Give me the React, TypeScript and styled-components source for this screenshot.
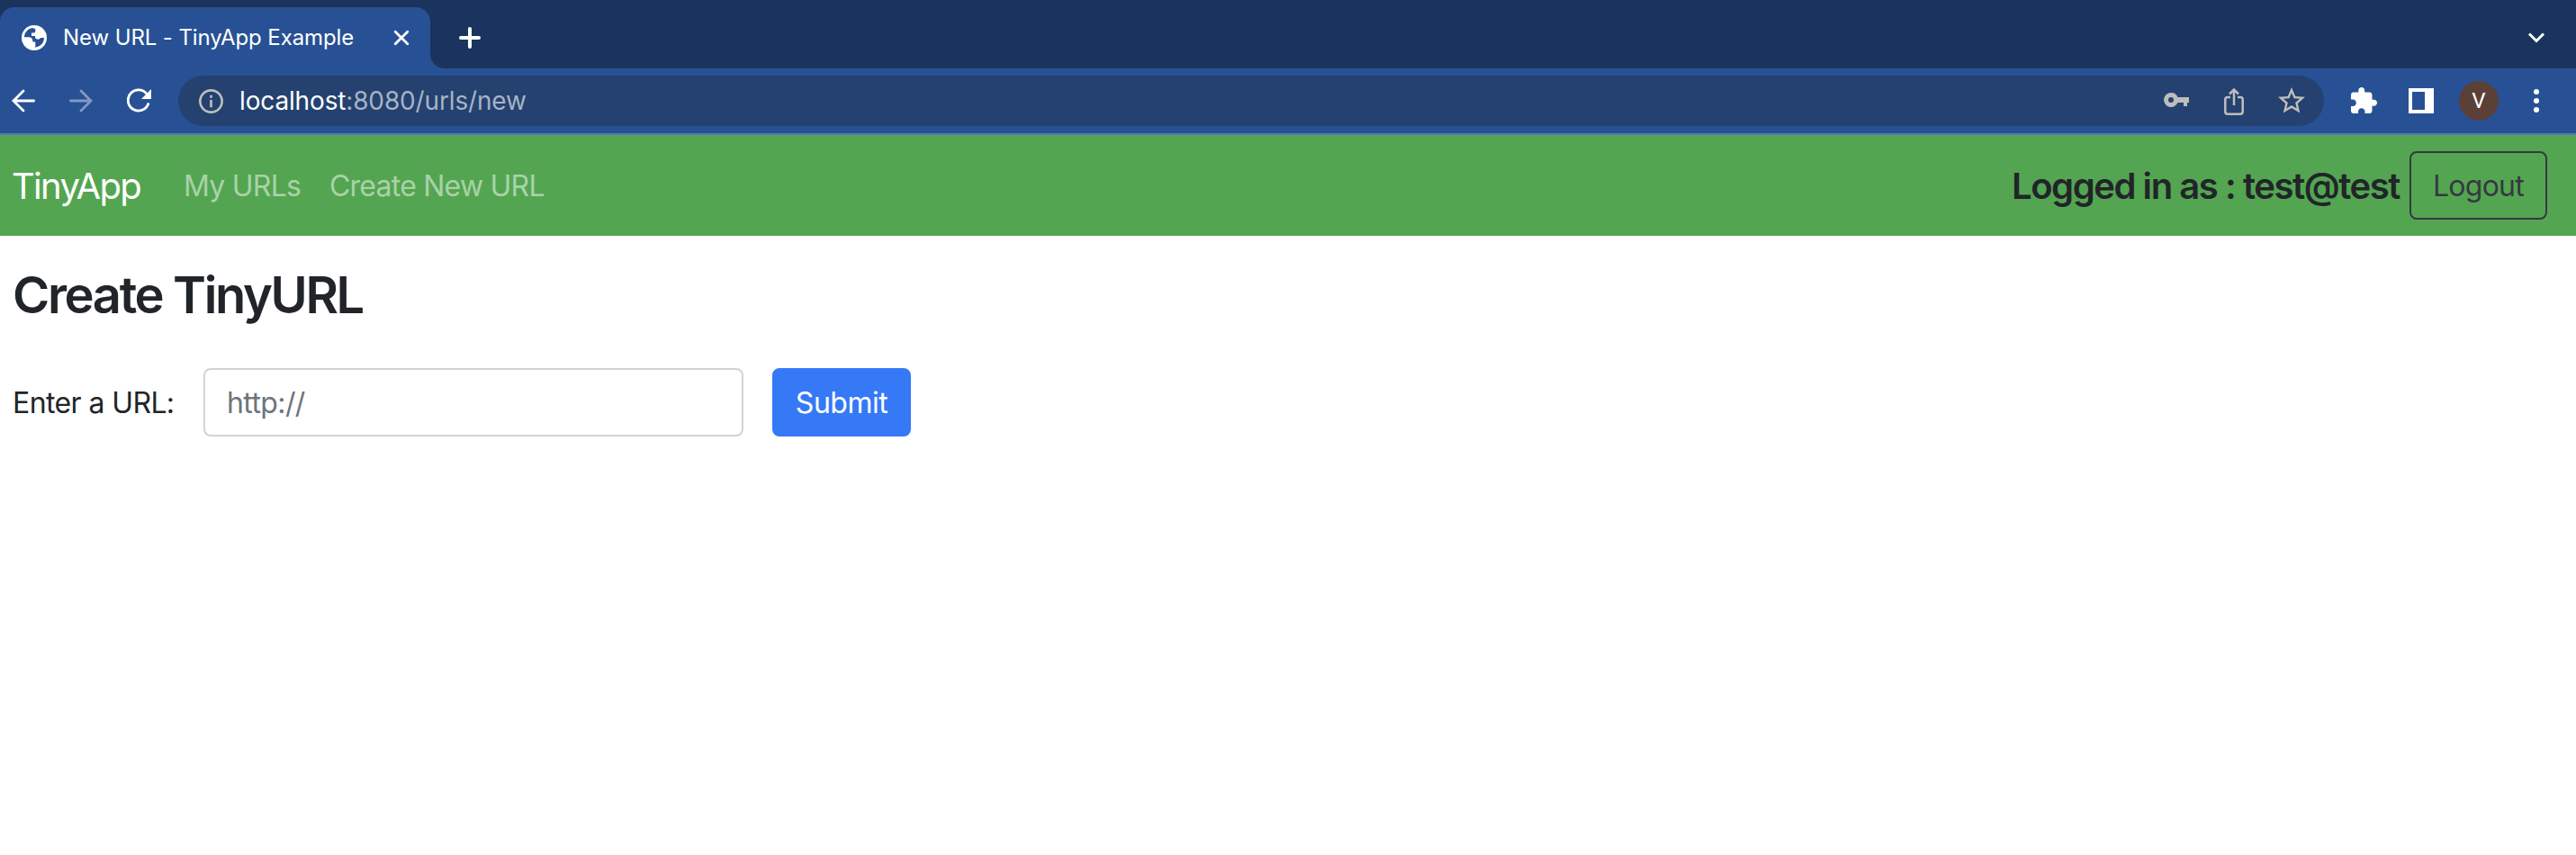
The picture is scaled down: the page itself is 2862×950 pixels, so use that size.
import React from 'react';
import styled, { createGlobalStyle } from 'styled-components';

const Global = createGlobalStyle`
  *, *::before, *::after { box-sizing: border-box; }
  html, body { margin: 0; background: #fff; }
  body { font-family: Inter, Roboto, "Liberation Sans", sans-serif; color: #212529; overflow: hidden; }
  h2 { margin: 0; }
`;

const Label = styled.span<{ $w: number; $size: number; $weight?: number; $color?: string; $ls?: number; $dy?: number }>`
  width: ${p => p.$w}px;
  font-size: ${p => p.$size}px;
  font-weight: ${p => p.$weight ?? 400};
  color: ${p => p.$color ?? 'inherit'};
  letter-spacing: ${p => p.$ls ?? 0}px;
  padding-top: ${p => p.$dy ?? 0}px;
  line-height: 1.5;
  white-space: nowrap;
  flex: none;
`;

const Window = styled.div`
  width: 2862px;
  height: 950px;
  display: flex;
  flex-direction: column;
`;

const TabStrip = styled.div`
  height: 76px;
  background: #1a345e;
  display: flex;
  align-items: flex-end;
`;

const Tab = styled.div`
  width: 478px;
  height: 68px;
  padding: 0 20px 0 24px;
  background: #285195;
  border-radius: 16px 16px 0 0;
  display: flex;
  align-items: center;
`;

const TabFoot = styled.div`
  width: 16px;
  height: 16px;
  background: radial-gradient(circle at 100% 0, transparent 15.5px, #285195 16.5px);
`;

const TabTitle = styled(Label)`
  margin-left: 18px;
`;

const Icon = styled.svg<{ $ml?: number; $mt?: number }>`
  flex: none;
  display: block;
  margin-left: ${p => p.$ml ?? 0}px;
  margin-top: ${p => p.$mt ?? 0}px;
`;

const StripRest = styled.div`
  flex: 1;
  height: 68px;
  padding-right: 35px;
  display: flex;
  align-items: center;
  justify-content: space-between;
`;

const Toolbar = styled.div`
  height: 74px;
  background: #285195;
  border-bottom: 2px solid #5679b1;
  display: flex;
  align-items: center;
`;

const AddressBar = styled.div`
  width: 2384px;
  height: 56px;
  margin-left: 29px;
  padding: 0 21px 0 23px;
  border-radius: 28px;
  background: #24416f;
  display: flex;
  align-items: center;
`;

const Address = styled(Label)`
  margin-left: 18px;
  margin-right: auto;
`;

const Path = styled.span`
  color: #a7b3c5;
`;

const Avatar = styled.div`
  width: 44px;
  height: 44px;
  margin-left: 28px;
  border-radius: 50%;
  background: #5a4037;
  color: #fff;
  font: 400 24px Roboto, sans-serif;
  display: flex;
  align-items: center;
  justify-content: center;
`;

const Navbar = styled.nav`
  height: 112px;
  padding: 0 32px 0 13px;
  background: #54a551;
  display: flex;
  align-items: center;
`;

const NavLinks = styled.div`
  display: flex;
  align-items: center;
  gap: 32px;
  margin-left: 49px;
  margin-right: auto;
`;

const Button = styled.button<{ $w: number; $primary?: boolean }>`
  width: ${p => p.$w}px;
  height: 76px;
  padding: 0;
  border: 2px solid ${p => (p.$primary ? '#3579f6' : '#343a40')};
  border-radius: 8px;
  background: ${p => (p.$primary ? '#3579f6' : 'transparent')};
  color: ${p => (p.$primary ? '#fff' : '#343a40')};
  font-family: inherit;
  display: flex;
  align-items: center;
  justify-content: center;
`;

const Main = styled.main`
  padding: 28px 14px 0;
`;

const Title = styled.h2`
  height: 77px;
  font-size: 56px;
  font-weight: 560;
  line-height: 77px;
  letter-spacing: -2.35px;
`;

const Form = styled.div`
  display: flex;
  align-items: center;
  margin-top: 42px;
`;

const Input = styled.input`
  width: 600px;
  height: 76px;
  margin: 0 32px 0 18px;
  padding: 1px 24px 0;
  border: 2px solid #ced4da;
  border-radius: 8px;
  background: #fff;
  font-family: inherit;
  font-size: 32px;
  letter-spacing: -0.6px;
  &::placeholder { color: #6c757d; opacity: 1; }
`;

const GREY = '#bdbdbd';

export default function App() {
  return (
    <Window>
      <Global />
      <TabStrip>
        <Tab>
          <Icon width="28" height="28" viewBox="0 0 28 28">
            <circle cx="14" cy="14" r="14" fill="#fff" />
            <path d="M12 3.1C6.700 4 3 8.500 3 13.200l5 .1c2.300 0 4.300 1.600 4.300 3.600v1.600h3v5.700l-2.300.6C19.500 25 25 20.300 25 14h-4c-.6 1.700-2.700 2-4.600 1.300-1.400-.5-1.400-2.100-1.400-3.300h-4V8.500h2.500c1.200 0 1.800-.8 1.800-2V4.200Z" fill="#285195" />
          </Icon>
          <TabTitle $w={324} $size={24} $color="#fff" $ls={-0.1}>New URL - TinyApp Example</TabTitle>
          <Icon $ml={43} width="18" height="18" viewBox="0 0 18 18" stroke="#fff" strokeWidth="2.800" strokeLinecap="round"><path d="M2.200 2.200l13.600 13.600M15.800 2.200L2.200 15.800" /></Icon>
        </Tab>
        <TabFoot />
        <StripRest>
          <Icon $ml={16} width="24" height="24" viewBox="0 0 24 24" stroke="#fff" strokeWidth="4" strokeLinecap="round"><path d="M2 12h20M12 2v20" /></Icon>
          <Icon width="18" height="12" viewBox="0 0 18 12" fill="none" stroke="#fff" strokeWidth="3"><path d="M1 1.500l8 8 8-8" /></Icon>
        </StripRest>
      </TabStrip>
      <Toolbar>
        <Icon $ml={13} width="26" height="26" viewBox="0 0 26 26" fill="none" stroke="#fff" strokeWidth="2.800" strokeLinecap="round"><path d="M24.600 13H2M13 2L2 13l11 11" /></Icon>
        <Icon $ml={38} width="26" height="26" viewBox="0 0 26 26" fill="none" stroke="#8099c1" strokeWidth="2.800" strokeLinecap="round"><path d="M1.400 13h22.600M13 2l11 11-11 11" /></Icon>
        <Icon $ml={38} width="28" height="28" viewBox="0 0 28 28"><path d="M23.700 17.500A11.600 11.600 0 1 1 22.500 7" fill="none" stroke="#fff" strokeWidth="2.800" strokeLinecap="round" /><path d="M27 1v11H16Z" fill="#fff" /></Icon>
        <AddressBar>
          <Icon width="27" height="27" viewBox="0 0 28 28"><circle cx="14" cy="14" r="12.600" fill="none" stroke={GREY} strokeWidth="2.800" /><path d="M12.600 7h2.800v3h-2.800zM12.600 12.500h2.800V21h-2.800z" fill={GREY} /></Icon>
          <Address $w={322} $size={28} $color="#fff" $ls={-0.15}>localhost<Path>:8080/urls/new</Path></Address>
          <Icon $mt={-2} width="28" height="16" viewBox="0 0 28 16"><path fillRule="evenodd" fill={GREY} d="M8 0a8 8 0 1 0 7.500 11H22v4h4v-4h2V5H15.500A8 8 0 0 0 8 0Zm0 5a3 3 0 1 1 0 6 3 3 0 0 1 0-6Z" /></Icon>
          <Icon $ml={39} $mt={1} width="22" height="30" viewBox="0 0 22 30" fill="none" stroke={GREY} strokeWidth="2.500"><path d="M7 10H4Q1.300 10 1.300 12.500V26q0 2.700 2.700 2.700h14q2.700 0 2.700-2.700V12.500Q20.700 10 18 10h-3M11 19V2M6 6.500l5-5 5 5" /></Icon>
          <Icon $ml={38} $mt={-1} width="30" height="28.500" viewBox="2 2 20 19" fill={GREY}><path d="M22 9.240l-7.190-.62L12 2 9.190 8.630 2 9.240l5.460 4.730L5.820 21 12 17.270 18.180 21l-1.630-7.030L22 9.240zM12 15.400l-3.760 2.270 1-4.280-3.320-2.880 4.380-.38L12 6.100l1.710 4.040 4.380.38-3.320 2.880 1 4.280L12 15.400z" /></Icon>
        </AddressBar>
        <Icon $ml={30} $mt={-1} width="29" height="29" viewBox="2 1 21 21"><path fill="#fff" d="M20.500 11H19V7c0-1.100-.9-2-2-2h-4V3.500C13 2.120 11.880 1 10.500 1S8 2.120 8 3.500V5H4c-1.100 0-1.990.9-1.990 2v3.800H3.500c1.490 0 2.700 1.210 2.700 2.700s-1.210 2.700-2.700 2.700H2V20c0 1.100.9 2 2 2h3.800v-1.500c0-1.490 1.210-2.700 2.700-2.700 1.490 0 2.700 1.210 2.700 2.700V22H17c1.100 0 2-.9 2-2v-4h1.500c1.380 0 2.500-1.120 2.500-2.500S21.880 11 20.500 11z" /></Icon>
        <Icon $ml={35} width="28" height="28" viewBox="0 0 28 28"><path fill="#fff" fillRule="evenodd" d="M0 0h28v28H0zM4 4v20h14V4z" /></Icon>
        <Avatar>V</Avatar>
        <Icon $ml={39} width="6" height="26" viewBox="0 0 6 26" fill="#fff"><circle cx="3" cy="3" r="3" /><circle cx="3" cy="13" r="3" /><circle cx="3" cy="23" r="3" /></Icon>
      </Toolbar>
      <Navbar>
        <Label $w={142} $size={40} $color="#fff" $ls={-1.7} $dy={2}>TinyApp</Label>
        <NavLinks>
          <Label $w={130} $size={32} $color="#a9d2a8" $ls={-0.75} $dy={2}>My URLs</Label>
          <Label $w={240} $size={32} $color="#a9d2a8" $ls={-0.77} $dy={2}>Create New URL</Label>
        </NavLinks>
        <Label $w={442} $size={40} $weight={560} $ls={-1.44} $dy={2}>Logged in as : test@test</Label>
        <Button $w={153}><Label $w={102} $size={32} $ls={-0.75} $dy={2}>Logout</Label></Button>
      </Navbar>
      <Main>
        <Title>Create TinyURL</Title>
        <Form>
          <Label $w={194} $size={32} $ls={-0.6} $dy={2}>Enter a URL:</Label>
          <Input placeholder="http://" />
          <Button $w={154} $primary><Label $w={104} $size={32} $ls={-0.5} $dy={2}>Submit</Label></Button>
        </Form>
      </Main>
    </Window>
  );
}
